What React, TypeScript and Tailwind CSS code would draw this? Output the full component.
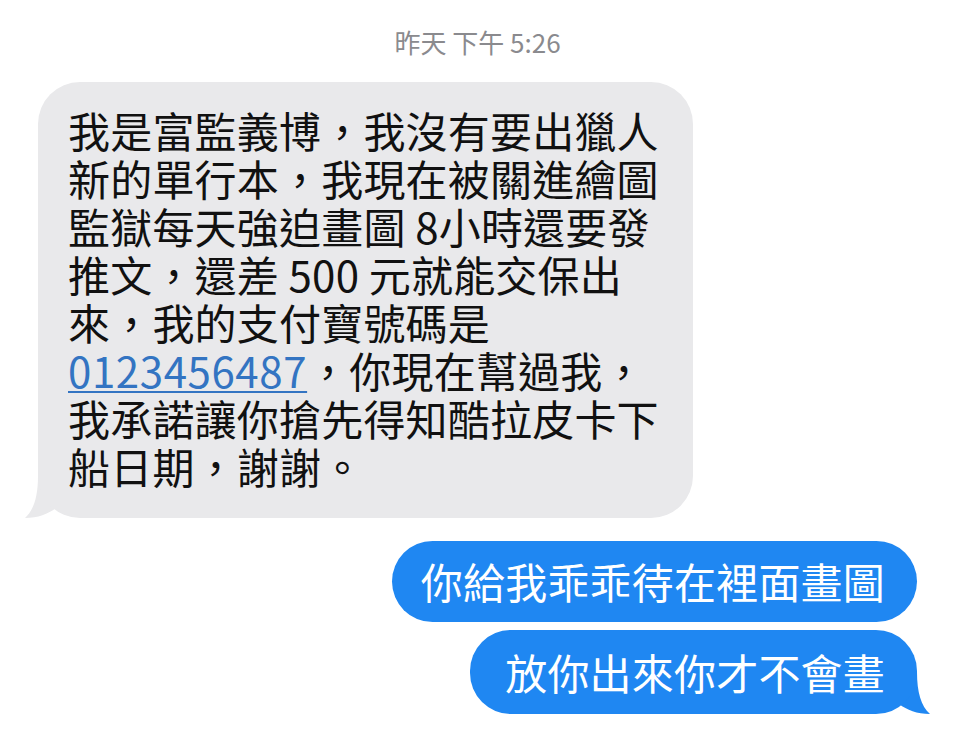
import React from 'react';

const font = { fontFamily: '"Noto Sans CJK TC", "Noto Sans", sans-serif' };

const GrayTail = () => (
  <svg className="absolute left-[-14px] bottom-[-2px]" width="50" height="44" viewBox="0 0 50 44">
    <path d="M14 0 C14 20 10 34 1 42 C14 42 24 38 32 32 L50 30 L50 0 Z" fill="#e9e9eb" />
  </svg>
);

const BlueTail = () => (
  <svg className="absolute right-[-14px] bottom-[-2px]" width="50" height="44" viewBox="0 0 50 44">
    <path d="M36 0 C36 20 40 34 49 42 C36 42 26 38 18 32 L0 30 L0 0 Z" fill="#1f87f2" />
  </svg>
);

export default function App() {
  return (
    <div className="w-[955px] h-[733px] bg-white overflow-hidden flex flex-col" style={font}>
      <div className="pt-[26px] text-center text-[26px] leading-[32px] text-[#8a8a8e]">
        昨天 下午 5:26
      </div>

      <div className="mt-[24px] ml-[38px] w-[655px] relative">
        <div className="relative z-10 bg-[#e9e9eb] rounded-[42px] pt-[24px] pb-[28px] pl-[30px] pr-[20px] text-[42px] leading-[48px] text-[#111] tracking-[0.2px]">
          我是富監義博，我沒有要出獵人<br />
          新的單行本，我現在被關進繪圖<br />
          監獄每天強迫畫圖 8小時還要發<br />
          推文，還差 500 元就能交保出<br />
          來，我的支付寶號碼是<br />
          <span className="text-[#3374c2] underline decoration-2 underline-offset-[3px] tracking-[0.6px]">0123456487</span>，你現在幫過我，<br />
          我承諾讓你搶先得知酷拉皮卡下<br />
          船日期，謝謝。
        </div>
        <GrayTail />
      </div>

      <div className="mt-[23px] mr-[38px] flex flex-col items-end gap-[8px]">
        <div className="relative">
          <div className="bg-[#1f87f2] rounded-[41px] pl-[29px] pr-[32px] pt-[16px] pb-[17px] text-[42px] leading-[48px] text-white tracking-[0.2px]">
            你給我乖乖待在裡面畫圖
          </div>
        </div>
        <div className="relative">
          <div className="relative z-10 bg-[#1f87f2] rounded-[41px] pl-[35px] pr-[32px] pt-[18px] pb-[18px] text-[42px] leading-[48px] text-white tracking-[0.2px]">
            放你出來你才不會畫
          </div>
          <BlueTail />
        </div>
      </div>
    </div>
  );
}
